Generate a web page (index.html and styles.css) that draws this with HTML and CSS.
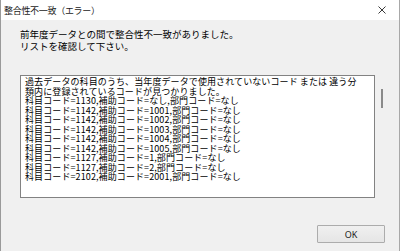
FILE: index.html
```html
<!DOCTYPE html>
<html lang="ja">
<head>
<meta charset="utf-8">
<link rel="stylesheet" href="styles.css">
</head>
<body>
<div class="window">
  <div class="titlebar">
    <span class="title">整合性不一致（エラー）</span>
    <span class="close">
      <svg width="8" height="8" viewBox="0 0 8 8"><path d="M0.5 0.5 L7.5 7.5 M7.5 0.5 L0.5 7.5" stroke="#222" stroke-width="0.9" fill="none"/></svg>
    </span>
  </div>
  <div class="body">
    <div class="message">
      <div>前年度データとの間で整合性不一致がありました。</div>
      <div>リストを確認して下さい。</div>
    </div>
    <div class="listrow">
      <div class="listbox">
        <div class="line">過去データの科目のうち、当年度データで使用されていないコード または 違う分</div>
        <div class="line">類内に登録されているコードが見つかりました。</div>
        <div class="line">科目コード=1130,補助コード=なし,部門コード=なし</div>
        <div class="line">科目コード=1142,補助コード=1001,部門コード=なし</div>
        <div class="line">科目コード=1142,補助コード=1002,部門コード=なし</div>
        <div class="line">科目コード=1142,補助コード=1003,部門コード=なし</div>
        <div class="line">科目コード=1142,補助コード=1004,部門コード=なし</div>
        <div class="line">科目コード=1142,補助コード=1005,部門コード=なし</div>
        <div class="line">科目コード=1127,補助コード=1,部門コード=なし</div>
        <div class="line">科目コード=1127,補助コード=2,部門コード=なし</div>
        <div class="line">科目コード=2102,補助コード=2001,部門コード=なし</div>
      </div>
      <div class="scrolltrack"><div class="thumb"></div></div>
    </div>
    <div class="buttons">
      <button class="ok">OK</button>
    </div>
  </div>
</div>
</body>
</html>
```
FILE: styles.css
```css
html, body {
  margin: 0;
  padding: 0;
}
body {
  width: 400px;
  height: 251px;
  overflow: hidden;
  background: #f0f0f0;
  font-family: "Noto Sans CJK JP", "Noto Sans", sans-serif;
  color: #000;
}
.window {
  box-sizing: border-box;
  width: 400px;
  height: 251px;
  border-left: 1px solid #9a9a9a;
  border-right: 1px solid #a8a8a8;
  display: flex;
  flex-direction: column;
}
.titlebar {
  height: 20px;
  background: #fff;
  display: flex;
  align-items: center;
  justify-content: space-between;
  padding-left: 3px;
  padding-right: 13px;
}
.title {
  font-size: 9px;
  letter-spacing: -0.3px;
  color: #1a1a1a;
}
.close {
  display: flex;
  width: 8px;
  height: 8px;
}
.body {
  flex: 1;
  display: flex;
  flex-direction: column;
  padding: 8px 0 0 19px;
}
.message {
  font-size: 9.5px;
  line-height: 12px;
  letter-spacing: 0;
}
.listrow {
  display: flex;
  margin-top: 23px;
  gap: 6px;
}
.listbox {
  box-sizing: border-box;
  width: 355px;
  height: 123px;
  border: 1px solid #828282;
  background: #fff;
  padding: 1px 0 0 4px;
  font-size: 9px;
  letter-spacing: 0.1px;
  white-space: nowrap;
  overflow: hidden;
}
.line {
  height: 9.5px;
  line-height: 9.5px;
}
.scrolltrack {
  width: 2px;
  padding-top: 14px;
}
.thumb {
  width: 2px;
  height: 19px;
  background: #8a8a8a;
}
.buttons {
  display: flex;
  justify-content: flex-end;
  padding-right: 14px;
  margin-top: 27px;
}
.ok {
  box-sizing: border-box;
  width: 68px;
  height: 18px;
  border: 1px solid #acacac;
  border-radius: 1px;
  background: linear-gradient(#f0f0f0, #e5e5e5);
  font-family: "Noto Sans", sans-serif;
  font-size: 9px;
  color: #222;
  padding: 0;
}
```
